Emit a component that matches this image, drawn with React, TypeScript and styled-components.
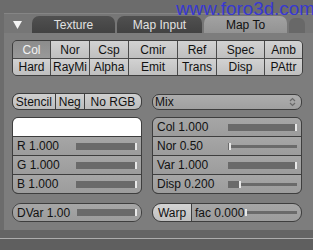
import { createGlobalStyle, styled } from "styled-components";

const Global = createGlobalStyle`
  body {
    margin: 0;
    background: #5e5e5e;
    font-family: "Liberation Sans", Arial, sans-serif;
  }
`;

const dark = "#3e3e3e";

const mapButtons = [
  ["Col", "Nor", "Csp", "Cmir", "Ref", "Spec", "Amb"],
  ["Hard", "RayMi", "Alpha", "Emit", "Trans", "Disp", "PAttr"],
];

type Slide = { label: string; frac: number };

const rgb: Slide[] = [
  { label: "R 1.000", frac: 1 },
  { label: "G 1.000", frac: 1 },
  { label: "B 1.000", frac: 1 },
];

const vars: Slide[] = [
  { label: "Col 1.000", frac: 1 },
  { label: "Nor 0.50", frac: 0.02 },
  { label: "Var 1.000", frac: 1 },
  { label: "Disp 0.200", frac: 0.17 },
];

const Slider = ({ frac, width }: { frac: number; width: number }) => (
  <Track $w={width}>
    <Line />
    <Fill style={{ width: `${frac * 100}%` }} />
    <Handle style={{ left: `calc(${frac * 100}% - ${frac * 2}px)` }} />
  </Track>
);

const App = () => {
  return (
    <Frame>
      <Global />
      <Watermark>www.foro3d.com</Watermark>
      <TopGap />
      <Panel>
        <Header>
          <Arrow width="9" height="8" viewBox="0 0 9 8">
            <polygon points="0,0 9,0 4.5,8" fill="#f4f4f4" />
          </Arrow>
          <Tabs>
            <Tab $w={83}>Texture</Tab>
            <Tab $w={85}>Map Input</Tab>
            <Tab $w={83} $active>
              Map To
            </Tab>
            <Stub />
          </Tabs>
        </Header>
        <Body>
          <ButtonGrid>
            {mapButtons.flat().map((b) => (
              <MapButton key={b} $on={b === "Col"}>
                {b}
              </MapButton>
            ))}
          </ButtonGrid>
          <Columns>
            <Toggles>
              <Toggle $w={43}>Stencil</Toggle>
              <Toggle $w={29}>Neg</Toggle>
              <Toggle $w={58}>No RGB</Toggle>
            </Toggles>
            <Select>
              <span>Mix</span>
              <svg width="7" height="10" viewBox="0 0 7 10">
                <path d="M1 4 L3.5 1.5 L6 4 M1 6 L3.5 8.5 L6 6" stroke="#6a6a6a" strokeWidth="1.2" fill="none" />
              </svg>
            </Select>
            <Stack>
              <Swatch />
              {rgb.map((s) => (
                <Field key={s.label}>
                  <Label>{s.label}</Label>
                  <Slider frac={s.frac} width={61} />
                </Field>
              ))}
            </Stack>
            <Stack>
              {vars.map((s) => (
                <Field key={s.label}>
                  <Label>{s.label}</Label>
                  <Slider frac={s.frac} width={69} />
                </Field>
              ))}
            </Stack>
            <Pill>
              <Field>
                <Label>DVar 1.00</Label>
                <Slider frac={1} width={60} />
              </Field>
            </Pill>
            <Pill>
              <WarpButton>Warp</WarpButton>
              <Field $left>
                <Label>fac 0.000</Label>
                <Slider frac={0} width={52} />
              </Field>
            </Pill>
          </Columns>
        </Body>
      </Panel>
      <BottomEdge />
    </Frame>
  );
};

export default App;

const Frame = styled.div`
  width: 313px;
  height: 250px;
  background: #6c6c6c;
  position: relative;
  overflow: hidden;
  display: flex;
  flex-direction: column;
`;

const Watermark = styled.div`
  position: absolute;
  top: 0;
  left: 176px;
  font-family: "Liberation Sans", Arial, sans-serif;
  font-size: 18.8px;
  line-height: 18px;
  color: #3838d0;
  white-space: nowrap;
  z-index: 2;
`;

const TopGap = styled.div`
  height: 13px;
  flex: none;
`;

const Panel = styled.div`
  margin-left: 4px;
  display: flex;
  flex-direction: column;
`;

const Header = styled.div`
  height: 20px;
  background: #767676;
  border-top: 1px solid #858585;
  box-sizing: border-box;
  display: flex;
  align-items: flex-end;
  padding-left: 9px;
`;

const Arrow = styled.svg`
  align-self: center;
  margin-top: 2px;
  margin-right: 10px;
`;

const Tabs = styled.div`
  display: flex;
  align-items: flex-end;
  gap: 2px;
`;

const Tab = styled.div<{ $w: number; $active?: boolean }>`
  width: ${(p) => p.$w}px;
  height: 17px;
  border-radius: 7px 7px 0 0;
  background: ${(p) =>
    p.$active ? "linear-gradient(#a2a2a2, #939393)" : "linear-gradient(#505050, #424242)"};
  color: ${(p) => (p.$active ? "#111" : "#e2e2e2")};
  font-size: 12px;
  display: flex;
  align-items: center;
  justify-content: center;
`;

const Stub = styled.div`
  width: 16px;
  height: 15px;
  border-radius: 6px 6px 0 0;
  background: #686868;
`;

const Body = styled.div`
  height: 197px;
  background: #7d7d7d;
  padding: 7px 0 0 8px;
  box-sizing: border-box;
`;

const ButtonGrid = styled.div`
  width: 291px;
  box-sizing: border-box;
  display: grid;
  grid-template-columns: 37px 38px 38px 48px 38px 47px 37px;
  grid-template-rows: 17px 16px;
  gap: 1px;
  background: #4a4a4a;
  border: 1px solid ${dark};
  border-radius: 5px;
  overflow: hidden;
`;

const MapButton = styled.div<{ $on?: boolean }>`
  background: ${(p) =>
    p.$on ? "linear-gradient(#8c8c8c, #999999)" : "linear-gradient(#d2d2d2, #bfbfbf)"};
  color: ${(p) => (p.$on ? "#f2f2f2" : "#111")};
  font-size: 12px;
  display: flex;
  align-items: center;
  justify-content: center;
`;

const Columns = styled.div`
  margin-top: 17px;
  display: grid;
  grid-template-columns: 130px 150px;
  grid-template-rows: 17px 77px 21px;
  column-gap: 10px;
  row-gap: 7px;
`;

const Toggles = styled.div`
  display: flex;
  border: 1px solid ${dark};
  border-radius: 7px;
  overflow: hidden;
  box-sizing: border-box;
  background: ${dark};
  gap: 1px;
`;

const Toggle = styled.div<{ $w: number }>`
  flex: ${(p) => p.$w} 1 0;
  background: linear-gradient(#d0d0d0, #bdbdbd);
  font-size: 12px;
  color: #111;
  display: flex;
  align-items: center;
  justify-content: center;
`;

const Select = styled.div`
  margin-top: 1px;
  border: 1px solid ${dark};
  border-radius: 7px;
  background: linear-gradient(#adadad, #a0a0a0);
  box-sizing: border-box;
  display: flex;
  align-items: center;
  justify-content: space-between;
  padding: 0 5px 0 2px;
  font-size: 12px;
  color: #111;
`;

const Stack = styled.div`
  border: 1px solid ${dark};
  border-radius: 6px;
  overflow: hidden;
  display: flex;
  flex-direction: column;
  background: ${dark};
  gap: 1px;
`;

const Swatch = styled.div`
  flex: 1;
  background: #ffffff;
`;

const Field = styled.div<{ $left?: boolean }>`
  flex: 1;
  display: flex;
  align-items: center;
  background: linear-gradient(#a6a6a6, #9c9c9c);
  padding-left: ${(p) => (p.$left ? 3 : 4)}px;
  font-size: 12px;
  color: #111;
  min-height: 0;
`;

const Label = styled.span`
  flex: 1;
  white-space: nowrap;
`;

const Track = styled.span<{ $w: number }>`
  width: ${(p) => p.$w}px;
  height: 7px;
  margin-right: 4px;
  position: relative;
  flex: none;
`;

const Line = styled.span`
  position: absolute;
  left: 0;
  right: 0;
  top: 2px;
  height: 3px;
  background: #6a6a6a;
`;

const Fill = styled.span`
  position: absolute;
  left: 0;
  top: 0;
  height: 7px;
  background: #6a6a6a;
`;

const Handle = styled.span`
  position: absolute;
  top: 0;
  width: 2px;
  height: 7px;
  background: #e8e8e8;
`;

const Pill = styled.div`
  align-self: end;
  height: 19px;
  display: flex;
  border: 1px solid ${dark};
  border-radius: 9px;
  overflow: hidden;
  box-sizing: border-box;
  background: ${dark};
  gap: 1px;
`;

const WarpButton = styled.div`
  width: 38px;
  flex: none;
  background: linear-gradient(#d4d4d4, #c0c0c0);
  font-size: 12px;
  color: #111;
  display: flex;
  align-items: center;
  justify-content: center;
`;

const BottomEdge = styled.div`
  flex: 1;
  border-top: 8px solid #656565;
  box-shadow: inset 0 1px 0 #adadad;
  background: #5f5f5f;
`;
